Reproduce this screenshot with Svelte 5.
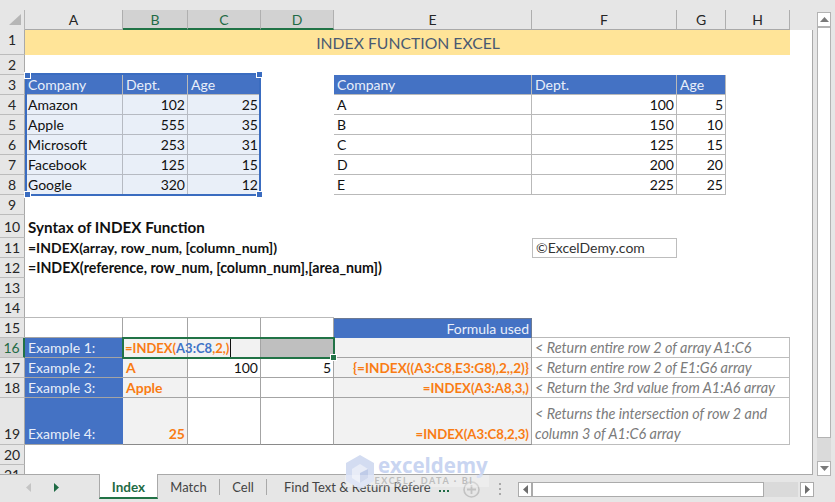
<script>
  const c = (t = '', k = '') => ({ t, k });
  const blank = (n, k = '') => Array.from({ length: n }, () => c('', k));
  const t1 = (a, b, d, e, f, g) => [
    c(a, 'tb ta'), c(b, 'tb ta num'), c(d, 'tb ta num'), c(),
    c(e, 'tw'), c(f, 'tw num'), c(g, 'tw num')
  ];
  const rows = [
    [1, [c('INDEX FUNCTION EXCEL', 'title')]],
    [2, []],
    [3, [c('Company', 'th ta'), c('Dept.', 'th ta'), c('Age', 'th ta'), c(), c('Company', 'th tw'), c('Dept.', 'th tw'), c('Age', 'th tw')]],
    [4, t1('Amazon', '102', '25', 'A', '100', '5')],
    [5, t1('Apple', '555', '35', 'B', '150', '10')],
    [6, t1('Microsoft', '253', '31', 'C', '125', '15')],
    [7, t1('Facebook', '125', '15', 'D', '200', '20')],
    [8, t1('Google', '320', '12', 'E', '225', '25')],
    [9, []],
    [10, [c('Syntax of INDEX Function', 'bold big')]],
    [11, [c('=INDEX(array, row_num, [column_num])', 'bold'), ...blank(4), c('©ExcelDemy.com', 'boxed')]],
    [12, [c('=INDEX(reference, row_num, [column_num],[area_num])', 'bold syn')]],
    [13, []],
    [14, blank(4, 'under')],
    [15, [...blank(4, 'gr'), c('Formula used', 'fu'), ...blank(3, 'under')]],
    [16, [c('Example 1:', 'ex'), c('', 'grey gr'), c('', 'grey gr'), c('', 'grey gr'), c('', 'grey gr'), c('< Return entire row 2 of array A1:C6', 'note')]],
    [17, [c('Example 2:', 'ex'), c('A', 'grey gr or'), c('100', 'gr num'), c('5', 'gr num'), c('{=INDEX((A3:C8,E3:G8),2,,2)}', 'grey gr or num fm2'), c('< Return entire row 2 of E1:G6 array', 'note')]],
    [18, [c('Example 3:', 'ex'), c('Apple', 'grey gr or'), c('', 'gr'), c('', 'gr'), c('=INDEX(A3:A8,3,)', 'grey gr or num fm'), c('< Return the 3rd value from A1:A6 array', 'note')]],
    [19, [c('Example 4:', 'ex low'), c('25', 'grey gr or num low dark'), c('', 'gr dark'), c('', 'gr dark'), c('=INDEX(A3:C8,2,3)', 'grey gr or num low dark fm'), c('< Returns the intersection of row 2 and\ncolumn 3 of A1:C6 array', 'note low')]],
    [20, []],
    [21, []]
  ];
  const cols = [['A', ''], ['B', 'sel'], ['C', 'sel'], ['D', 'sel'], ['E', ''], ['F', ''], ['G', ''], ['H', '']];
</script>

<div class="app">
  <div class="main">
    <div class="left">
      <div class="colheads">
        <div class="corner"><svg width="25" height="20" viewBox="0 0 25 20"><path d="M9 15 L21 4 V15 Z" fill="#b6b6b6" /></svg></div>
        {#each cols as [name, k]}
          <div class="ch {k}">{name}</div>
        {/each}
      </div>
      <div class="sheet">
        <div class="cells">
          {#each rows as [n, cells]}
            <div class="rh" class:rsel={n === 16} class:rlow={n === 19 || n === 10}>{n}</div>
            {#each cells as cell}
              <div class="cell {cell.k}">{cell.t}</div>
            {/each}
            <div class="fill"></div>
          {/each}
        </div>

        <div class="tablesel">
          <i class="h tl"></i><i class="h tr"></i><i class="h bl"></i><i class="h br"></i>
        </div>

        <div class="active">
          <span class="o">=INDEX(</span><span class="b">A3:C8</span><span class="o">,2,)</span><span class="caret"></span>
          <span class="greyblock"></span>
          <i class="fillh"></i>
        </div>
      </div>
    </div>
    <div class="vscroll">
      <div class="btn"><svg width="9" height="5" viewBox="0 0 9 5"><path d="M4.5 0 L9 5 H0 Z" fill="#7a7a7a" /></svg></div>
      <div class="vthumb"></div>
      <div class="vtrack"></div>
      <div class="btn"><svg width="9" height="5" viewBox="0 0 9 5"><path d="M0 0 H9 L4.5 5 Z" fill="#7a7a7a" /></svg></div>
    </div>
  </div>

  <div class="tabs">
    <div class="nav">
      <svg width="6" height="9" viewBox="0 0 6 9"><path d="M5 0 V9 L0 4.5 Z" fill="#c4c4c4" /></svg>
      <svg width="6" height="9" viewBox="0 0 6 9"><path d="M0 0 V9 L5 4.5 Z" fill="#1f6b45" /></svg>
    </div>
    <div class="tab on">Index</div>
    <div class="tab m">Match</div>
    <div class="tab ce">Cell</div>
    <div class="tab find"><span>Find Text &amp; Return Reference</span></div>
    <div class="more"><i></i><i></i><i></i></div>
    <div class="plus"><svg width="17" height="17" viewBox="0 0 17 17"><circle cx="8.5" cy="8.5" r="7.5" fill="none" stroke="#c2c2c2" stroke-width="1.6" /><path d="M8.5 4 V13 M4 8.5 H13" stroke="#c2c2c2" stroke-width="1.8" /></svg></div>
    <div class="kebab"><i></i><i></i><i></i></div>
    <div class="hscroll">
      <div class="hbtn"><svg width="5" height="9" viewBox="0 0 5 9"><path d="M5 0 V9 L0 4.5 Z" fill="#6e6e6e" /></svg></div>
      <div class="hthumb"></div>
      <div class="htrack"></div>
      <div class="hbtn last"><svg width="5" height="9" viewBox="0 0 5 9"><path d="M0 0 V9 L5 4.5 Z" fill="#6e6e6e" /></svg></div>
    </div>
  </div>

  <div class="wm">
    <svg width="28" height="35" viewBox="0 0 28 35">
      <path d="M14 0 L28 8 V26 L14 34 L0 26 V8 Z" fill="#d3dcf1" />
      <path d="M14 9 L22 14 V23 L14 28 L6 23 V14 Z" fill="#e8ecf7" />
      <path d="M14 18 L22 14 V23 L14 28 Z" fill="#bfcbe8" />
    </svg>
    <div class="wm1">exceldemy</div>
    <div class="wm2">EXCEL · DATA · BI</div>
  </div>
</div>

<style>
  :global(body) { margin: 0; }
  .app {
    position: relative;
    width: 835px;
    height: 502px;
    overflow: hidden;
    background: #e6e6e6;
    font-family: "Lato", "Open Sans", sans-serif;
    font-size: 14px;
    color: #1a1a1a;
    display: flex;
    flex-direction: column;
  }
  .main { display: flex; height: 475px; }
  .left { width: 813px; padding-top: 10px; box-sizing: border-box; display: flex; flex-direction: column; }
  .colheads {
    display: grid;
    grid-template-columns: 25px 98px 65px 73px 73px 198px 145px 49px 64px;
    height: 20px;
    box-sizing: border-box;
  }
  .corner { height: 20px; border-right: 1px solid #b5b5b5; box-sizing: border-box; }
  .corner svg { display: block; }
  .ch {
    height: 20px;
    box-sizing: border-box;
    text-align: center;
    line-height: 19px;
    border-right: 1px solid #aeaeae;
    border-bottom: 1px solid #a9a9a9;
    color: #262626;
  }
  .ch.sel {
    background: #d2d2d2;
    color: #1f6b45;
    border-bottom: 2px solid #217346;
    border-right-color: #b0b0b0;
  }
  .sheet {
    position: relative;
    height: 445px;
    overflow: hidden;
    background: #fff;
    border-right: 1px solid #a9a9a9;
    border-bottom: 1px solid #a9a9a9;
    box-sizing: border-box;
  }
  .cells {
    display: grid;
    grid-template-columns: 25px 98px 65px 73px 73px 198px 145px 49px 64px 22px;
    grid-template-rows: 25px repeat(8, 20px) 23px repeat(8, 20px) 47px 20px 20px;
  }
  .rh {
    grid-column: 1;
    background: #e6e6e6;
    border-right: 1px solid #a9a9a9;
    border-bottom: 1px solid #bcbcbc;
    box-sizing: border-box;
    text-align: center;
    line-height: 20px;
    color: #262626;
  }
  .rh.rsel {
    background: #d2d2d2;
    color: #1f6b45;
    border-right: 2px solid #217346;
  }
  .rh.rlow { display: flex; align-items: flex-end; justify-content: center; }
  .fill { min-width: 0; }
  .cell {
    box-sizing: border-box;
    padding: 0 2px 0 3px;
    line-height: 20px;
    white-space: pre;
    min-width: 0;
    color: #111;
  }
  .num { text-align: right; }
  .low { display: flex; flex-direction: column; justify-content: flex-end; }
  .low.num { align-items: flex-end; }
  .title {
    grid-column: 2 / span 8;
    background: #ffe498;
    text-align: center;
    color: #4a5a72;
    font-size: 15.75px;
    line-height: 25px;
  }
  .th {
    background: #4472c4;
    color: #e9effa;
    border-right: 1px solid #b9b9b9;
    border-bottom: 1px solid #b9b9b9;
  }
  .tb { background: #e9eff8; border-right: 1px solid #b6bac2; border-bottom: 1px solid #b6bac2; }
  .tw { border-right: 1px solid #b9b9b9; border-bottom: 1px solid #b9b9b9; }
  .bold { font-weight: 700; }
  .big { font-size: 15.2px; line-height: 24px; }
  .syn { font-size: 14.2px; }
  .boxed { border: 1px solid #bdbdbd; line-height: 18px; color: #333; }
  .under { border-bottom: 1px solid #b9b9b9; }
  .gr { border-right: 1px solid #a4a4a4; border-bottom: 1px solid #a4a4a4; }
  .grey { background: #f2f2f2; }
  .or { color: #f97c14; font-weight: 700; }
  .fm { font-size: 13.2px; }
  .fm2 { font-size: 13.6px; }
  .dark { border-bottom-color: #8a8a8a; }
  .fu {
    background: #4472c4;
    color: #e9effa;
    text-align: right;
    border-top: 1px solid #6c7a94;
    border-right: 1px solid #6c7a94;
  }
  .ex {
    background: #4472c4;
    color: #e9effa;
    border-bottom: 1px solid #a4a4a4;
  }
  .note {
    grid-column: span 3;
    color: #7b7b7b;
    font-style: italic;
    font-size: 14.4px;
    border-right: 1px solid #bdbdbd;
    border-bottom: 1px solid #bdbdbd;
  }
  .tablesel {
    position: absolute;
    left: 25px;
    top: 43px;
    width: 236px;
    height: 123px;
    box-sizing: border-box;
    border: 2px solid #3a6cc0;
    pointer-events: none;
  }
  .h { position: absolute; width: 5px; height: 5px; background: #3a6cc0; border: 1px solid #fff; }
  .tl { left: -3px; top: -3px; }
  .tr { right: -4px; top: -4px; }
  .bl { left: -3px; bottom: -4px; }
  .br { right: -4px; bottom: -4px; }
  .active {
    position: absolute;
    left: 122px;
    top: 307px;
    width: 213px;
    height: 22px;
    box-sizing: border-box;
    border: 2px solid #217346;
    padding-left: 1px;
    line-height: 18px;
    font-weight: 700;
    font-size: 13px;
    white-space: pre;
    display: flex;
  }
  .o { color: #f97c14; }
  .b { color: #3f74c8; }
  .caret { width: 1px; height: 18px; background: #111; margin-left: 1px; }
  .greyblock { position: absolute; left: 137px; top: 0; width: 72px; height: 18px; background: #bfbfbf; }
  .fillh { position: absolute; right: -4px; bottom: -4px; width: 5px; height: 5px; background: #217346; border: 1px solid #fff; }
  .vscroll { width: 14px; padding: 12px 4px 0 4px; display: flex; flex-direction: column; align-items: center; }
  .btn {
    width: 14px;
    height: 15px;
    background: #fff;
    border: 1px solid #b3b3b3;
    box-sizing: border-box;
    display: flex;
    align-items: center;
    justify-content: center;
    flex: none;
  }
  .vthumb { width: 14px; height: 411px; background: #fff; border: 1px solid #b3b3b3; box-sizing: border-box; flex: none; }
  .vtrack { width: 14px; height: 23px; background: #dadada; flex: none; }
  .tabs { height: 27px; display: flex; align-items: flex-start; position: relative; font-size: 13px; }
  .nav { width: 99px; height: 24px; box-sizing: border-box; padding-left: 26px; display: flex; gap: 22px; align-items: center; }
  .tab { height: 24px; line-height: 25px; box-sizing: border-box; color: #444; text-align: center; }
  .tab.on {
    width: 59px;
    background: #fff;
    color: #1f6b45;
    font-weight: 700;
    font-size: 13.5px;
    border-left: 1px solid #a9a9a9;
    border-right: 1px solid #a9a9a9;
    border-bottom: 2px solid #217346;
    height: 25px;
    margin-top: -1px;
    line-height: 27px;
  }
  .tab.m { width: 62px; border-right: 1px solid #a9a9a9; height: 16px; line-height: 17px; margin-top: 4px; }
  .tab.ce { width: 47px; border-right: 1px solid #a9a9a9; height: 16px; line-height: 17px; margin-top: 4px; }
  .tab.find { width: 164px; overflow: hidden; white-space: nowrap; text-align: left; padding-left: 17px; }
  .more { width: 32px; height: 24px; box-sizing: border-box; padding: 15px 0 0 8px; display: flex; gap: 2px; align-items: flex-start; }
  .more i { width: 2px; height: 2px; background: #1f6b45; }
  .plus { width: 17px; height: 17px; margin: 6px 0 0 0; }
  .plus svg { display: block; }
  .kebab { display: flex; flex-direction: column; gap: 3px; margin: 8px 0 0 19px; width: 2px; }
  .kebab i { width: 2px; height: 2px; background: #a9a9a9; }
  .hscroll { position: absolute; left: 518px; top: 7px; display: flex; height: 15px; }
  .hbtn { width: 14px; height: 15px; background: #fff; border: 1px solid #ababab; box-sizing: border-box; display: flex; align-items: center; justify-content: center; }
  .hbtn.last { margin-left: 2px; }
  .hthumb { width: 232px; background: #fff; border: 1px solid #ababab; box-sizing: border-box; }
  .htrack { width: 34px; background: #dadada; }
  .wm {
    position: absolute;
    left: 345px;
    top: 455px;
    width: 144px;
    height: 35px;
    pointer-events: none;
  }
  .wm svg { position: absolute; left: 1px; top: 0; }
  .wm1 {
    position: absolute;
    left: 33px;
    top: -3px;
    font-family: "Open Sans", sans-serif;
    font-weight: 700;
    font-size: 20.5px;
    line-height: 26px;
    color: #c9d5f1;
  }
  .wm2 {
    position: absolute;
    left: 0;
    right: 0;
    top: 20px;
    height: 12px;
    font-size: 9px;
    line-height: 12px;
    color: #bdbdbd;
    background: rgba(255, 255, 255, 0.28);
    letter-spacing: 1.6px;
    text-align: center;
    font-weight: 700;
    padding-left: 14px;
    box-sizing: border-box;
  }
</style>
